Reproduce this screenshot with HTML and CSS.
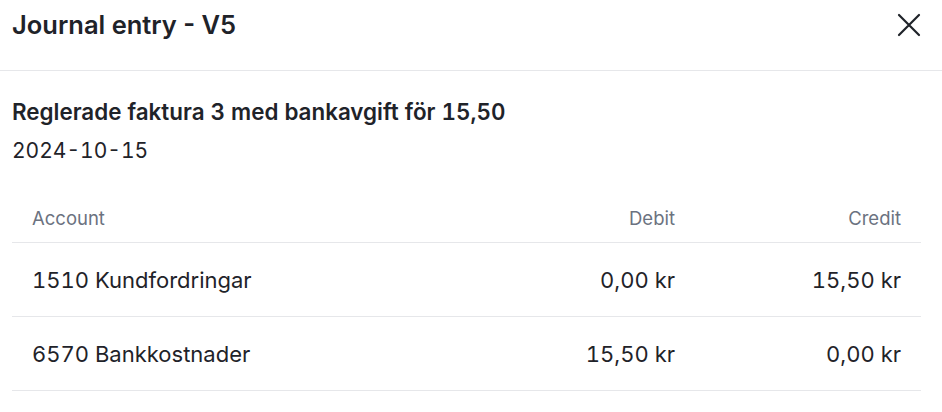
FILE: index.html
```html
<!DOCTYPE html>
<html lang="sv">
<head>
<meta charset="utf-8">
<title>Journal entry - V5</title>
<link rel="stylesheet" href="styles.css">
</head>
<body>
<div class="modal">
  <header class="modal-header">
    <h1 class="modal-title">Journal entry - V5</h1>
    <button class="close-btn" aria-label="Close">
      <svg width="24" height="24" viewBox="0 0 24 24" fill="none" stroke="currentColor" stroke-width="2.2" stroke-linecap="round"><path d="M2 2L22 22M22 2L2 22"/></svg>
    </button>
  </header>
  <div class="modal-body">
    <h2 class="entry-title">Reglerade faktura 3 med bankavgift för 15,50</h2>
    <div class="entry-date">2024-10-15</div>
    <div class="ledger">
      <div class="row head">
        <div class="cell">Account</div>
        <div class="cell num">Debit</div>
        <div class="cell num">Credit</div>
      </div>
      <div class="row">
        <div class="cell">1510 Kundfordringar</div>
        <div class="cell num">0,00 kr</div>
        <div class="cell num">15,50 kr</div>
      </div>
      <div class="row">
        <div class="cell">6570 Bankkostnader</div>
        <div class="cell num">15,50 kr</div>
        <div class="cell num">0,00 kr</div>
      </div>
    </div>
  </div>
</div>
</body>
</html>
```
FILE: styles.css
```css
* { box-sizing: border-box; }
html, body { margin: 0; padding: 0; background: #fff; }
body {
  font-family: Inter, "Noto Sans", "Liberation Sans", sans-serif;
  font-variant-numeric: tabular-nums;
  color: #1f2329;
}
.modal { width: 942px; }
.modal-header {
  height: 71px;
  display: flex;
  justify-content: space-between;
  align-items: flex-start;
  padding: 9px 21px 0 12px;
  border-bottom: 1px solid #e6e7ea;
}
.modal-title {
  margin: 0;
  font-size: 25.5px;
  line-height: 32px;
  font-weight: 600;
  font-variant-numeric: normal;
}
.close-btn {
  border: 0;
  background: none;
  padding: 0;
  margin-top: 4px;
  color: #1f2329;
  display: flex;
}
.modal-body { padding: 26px 21px 0 12px; }
.entry-title {
  margin: 0;
  font-size: 22.4px;
  line-height: 30px;
  font-weight: 600;
}
.entry-date {
  font-size: 21px;
  line-height: 30px;
  margin-top: 9px;
}
.ledger { margin-top: 23px; }
.row {
  display: grid;
  grid-template-columns: 1fr 226px 226px;
  border-bottom: 1px solid #e6e7ea;
  font-size: 22px;
  line-height: 28px;
}
.row .cell { padding: 23px 20px 22px 20px; }
.row.head { font-size: 18.5px; color: #6b7280; }
.row.head .cell { padding: 15px 20px 10px 20px; }
.num { text-align: right; }
```
